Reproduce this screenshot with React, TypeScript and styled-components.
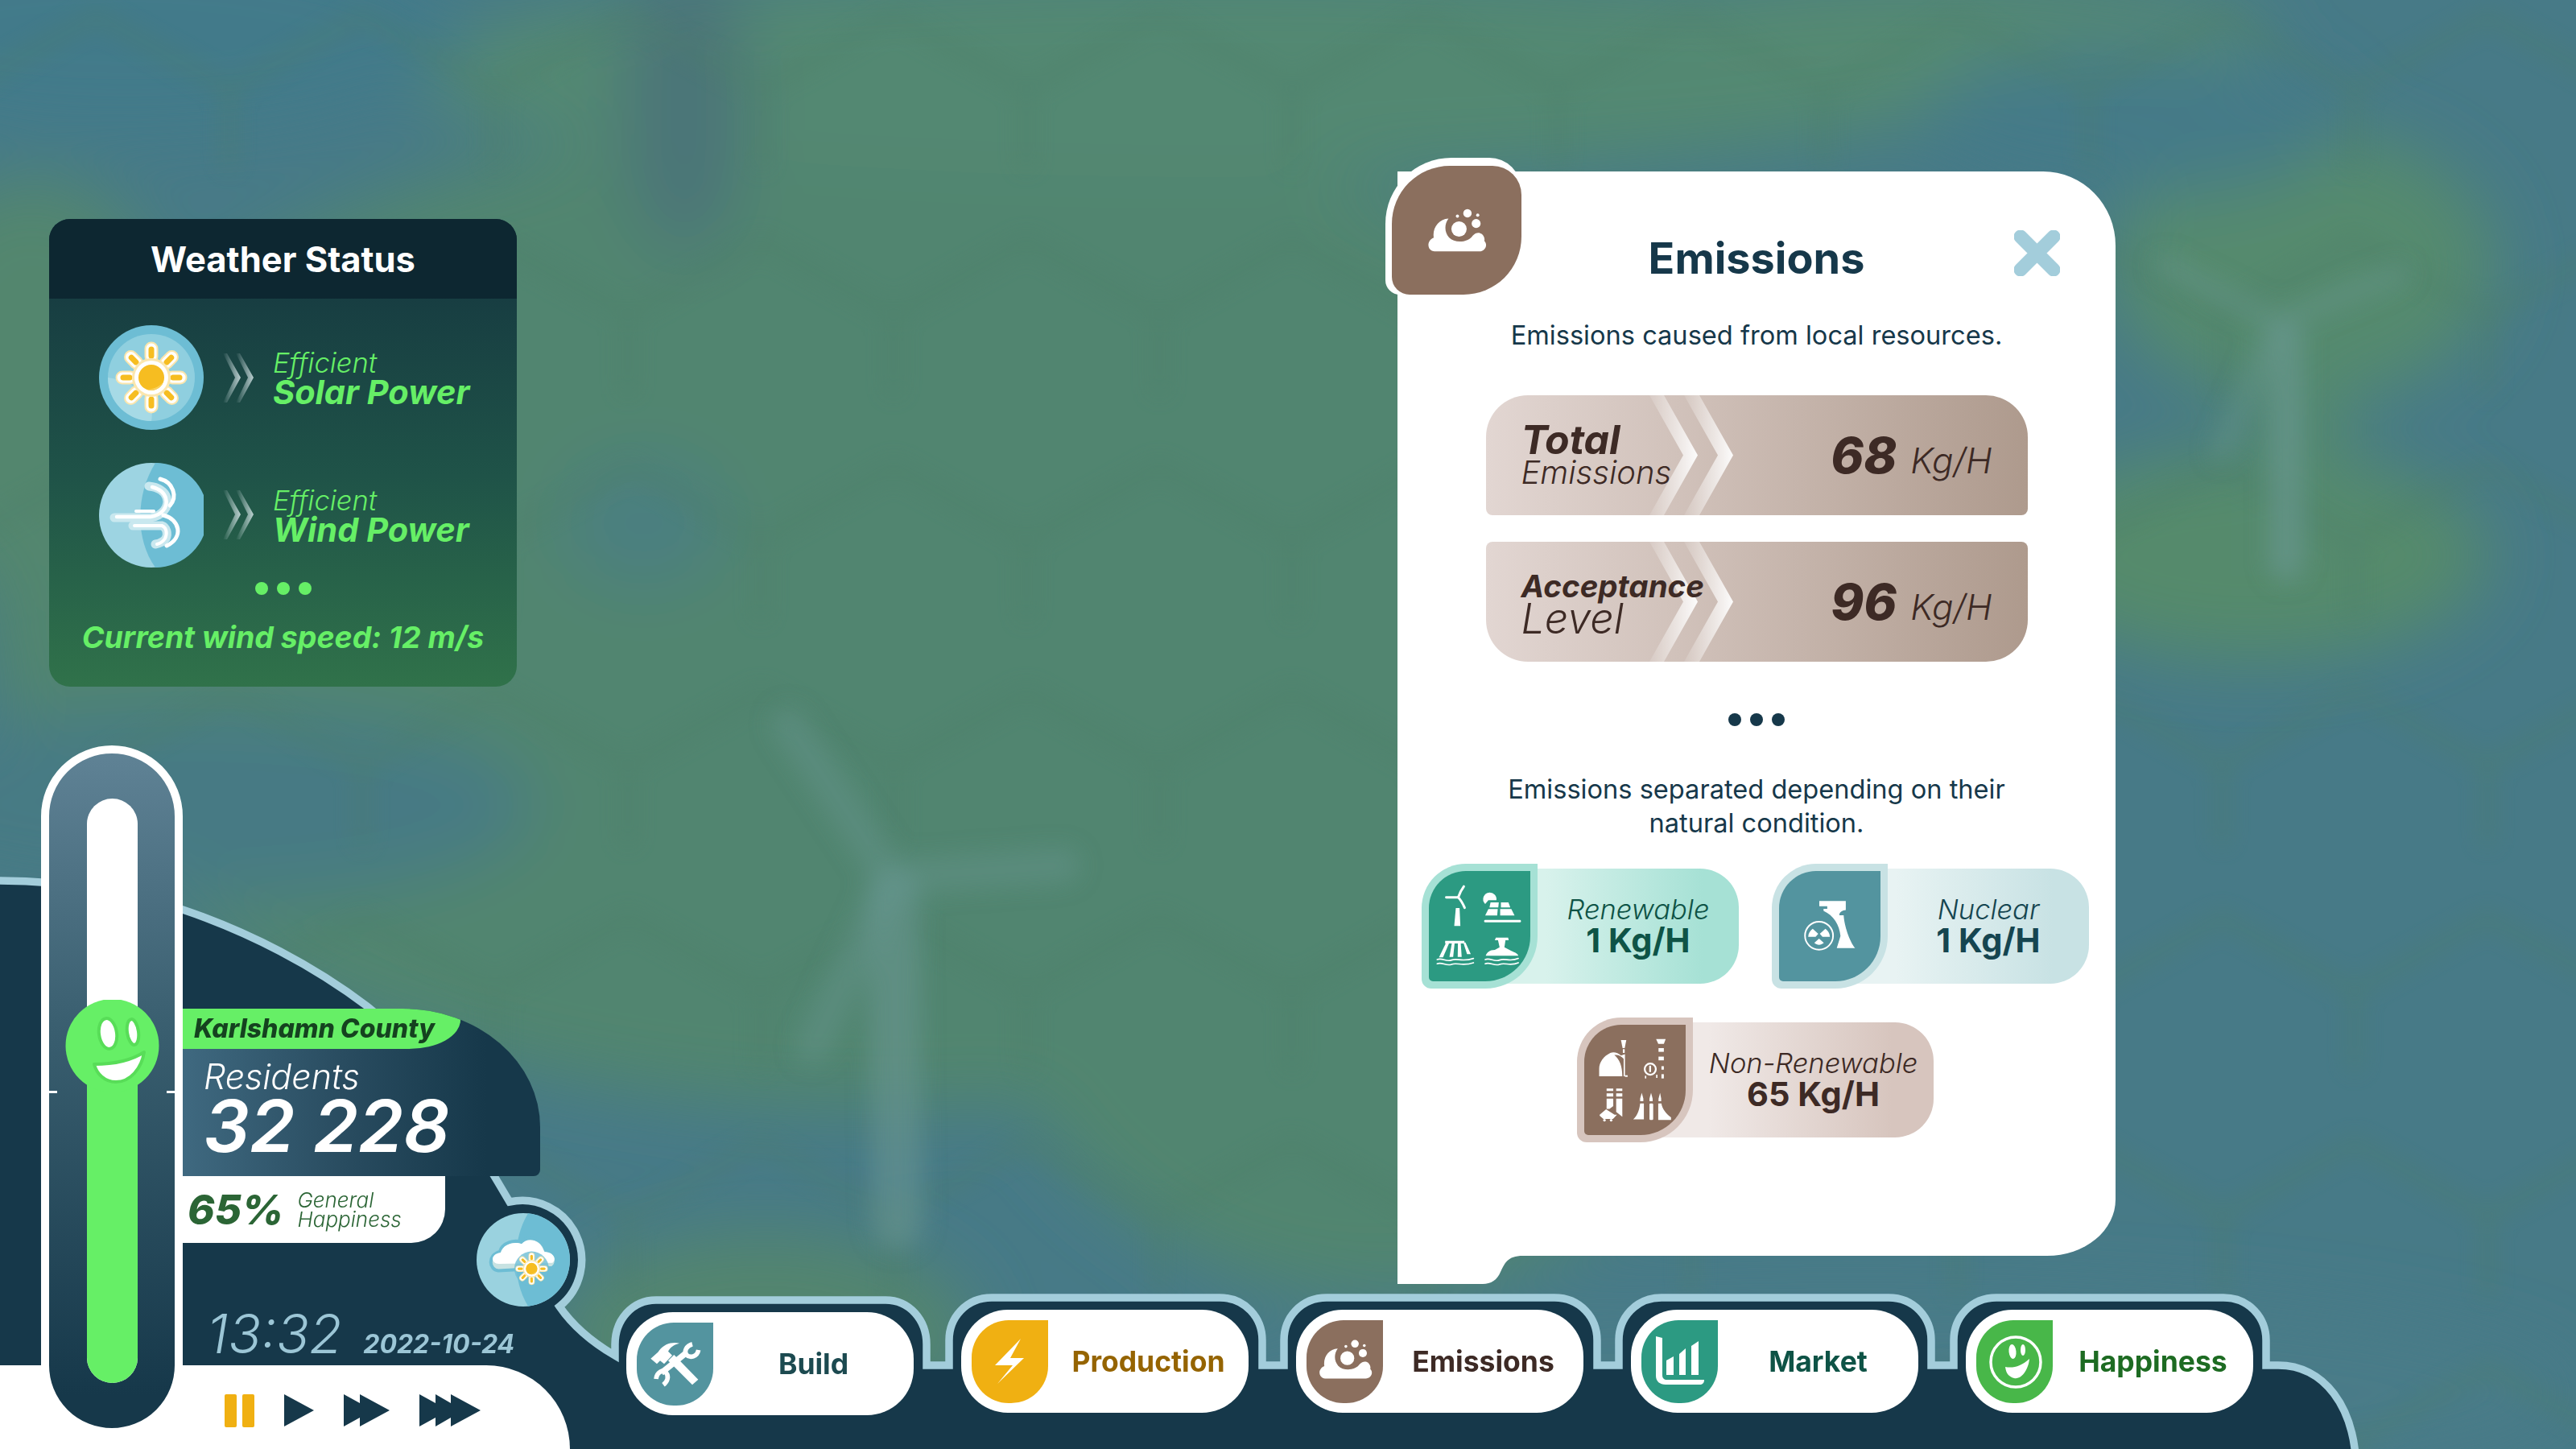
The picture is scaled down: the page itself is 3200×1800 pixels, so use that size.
import React from 'react';
import styled, { createGlobalStyle } from 'styled-components';
import { ReactNode } from 'react';

const FONT = `Inter, Lato, "Liberation Sans", sans-serif`;
const NAVY = '#16384a';
const SKY = '#a3cddb';
const LIME = '#66ef66';
const BROWN = '#8b6f5e';
const COCOA = '#3d2a25';

const GlobalStyle = createGlobalStyle`
  html, body {
    margin: 0;
    padding: 0;
    width: 3200px;
    height: 1800px;
    overflow: hidden;
    background: #477a87;
  }
  * {
    box-sizing: border-box;
  }
`;

const Stage = styled.div`
  position: relative;
  width: 3200px;
  height: 1800px;
  overflow: hidden;
  display: flex;
  align-items: flex-start;
  padding-left: 61px;
  font-family: ${FONT};
`;

const Backdrop = styled.svg`
  position: absolute;
  inset: 0;
  width: 3200px;
  height: 1800px;
`;

/* Weather panel */
const WeatherPanel = styled.section`
  position: relative;
  width: 581px;
  height: 581px;
  margin-top: 272px;
  border-radius: 26px;
  overflow: hidden;
  background: linear-gradient(180deg, #14343f 0%, #1f5348 55%, #30724a 100%);
`;

const WeatherHeader = styled.h2`
  margin: 0;
  height: 99px;
  background: #0d2731;
  color: #fff;
  font-size: 43.5px;
  font-weight: 700;
  line-height: 100px;
  text-align: center;
`;

const WeatherRows = styled.div`
  display: flex;
  flex-direction: column;
  gap: 40.5px;
  padding: 33px 0 0 62px;
`;

const WeatherRow = styled.div`
  display: flex;
  align-items: center;
  gap: 24px;
`;

const RoundIcon = styled.svg`
  width: 130px;
  height: 130px;
  flex: none;
`;

const SmallChevrons = styled.svg`
  width: 38px;
  height: 61px;
  flex: none;
`;

const WeatherText = styled.div`
  display: flex;
  flex-direction: column;
  color: ${LIME};
  font-style: italic;
  line-height: 37px;
`;

const WeatherState = styled.span`
  font-size: 34.5px;
  font-weight: 300;
`;

const WeatherName = styled.span`
  font-size: 41.5px;
  font-weight: 700;
`;

const Dots = styled.div<{ $color: string }>`
  display: flex;
  justify-content: center;
  gap: 11px;
  & > i {
    width: 16px;
    height: 16px;
    border-radius: 50%;
    background: ${(p) => p.$color};
  }
`;

const WeatherDots = styled(Dots)`
  margin-top: 18px;
`;

const WindSpeed = styled.div`
  margin-top: 33px;
  color: ${LIME};
  font-size: 37.5px;
  font-style: italic;
  font-weight: 700;
  line-height: 40px;
  text-align: center;
`;

/* Emissions panel */
const EmissionsPanel = styled.section`
  position: relative;
  z-index: 2;
  width: 892px;
  height: 1347px;
  margin: 213px 0 0 1094px;
  padding: 80px 0 0;
  background: #fff;
  border-radius: 0 90px 85px 0 / 0 92px 70px 0;
  display: flex;
  flex-direction: column;
  align-items: center;
  color: ${NAVY};

  &::after {
    content: '';
    position: absolute;
    left: 0;
    top: 100%;
    width: 160px;
    height: 35px;
    background: #fff;
    clip-path: path('M0 0H156C136 0 133 10 128 20C124 30 116 35 106 35H0Z');
  }
`;

const PanelBadge = styled.div`
  position: absolute;
  left: -15px;
  top: -17px;
  width: 169px;
  height: 170px;
  padding: 10px 0 0 8px;
  background: #fff;
  border-radius: 82px 40px 0 18px;
`;

const BadgeLeaf = styled.div`
  width: 161px;
  height: 160px;
  background: ${BROWN};
  border-radius: 72px 36px 72px 22px;
  display: flex;
  align-items: center;
  justify-content: center;
`;

const CloseButton = styled.svg`
  position: absolute;
  left: 766px;
  top: 73px;
  width: 57px;
  height: 57px;
`;

const PanelTitle = styled.h1`
  margin: 0;
  font-size: 54px;
  font-weight: 700;
  line-height: 56px;
`;

const PanelText = styled.p<{ $top: number }>`
  margin: ${(p) => p.$top}px 0 0;
  font-size: 32.6px;
  line-height: 42px;
  text-align: center;
`;

const StatBar = styled.div<{ $second?: boolean }>`
  position: relative;
  flex: none;
  width: 673px;
  height: 149px;
  margin-top: ${(p) => (p.$second ? 33 : 54)}px;
  padding: 0 44px;
  color: ${COCOA};
  display: flex;
  align-items: center;
  justify-content: space-between;
  background: linear-gradient(90deg, #e2d6d2 0%, #ccbcb4 45%, #ae9a8d 100%);
  border-radius: ${(p) => (p.$second ? '8px 8px 52px 52px' : '52px 52px 8px 8px')};
`;

const StatChevrons = styled.svg`
  position: absolute;
  left: 202px;
  top: 0;
  width: 106px;
  height: 149px;
`;

const StatLabel = styled.div`
  position: relative;
  display: flex;
  flex-direction: column;
  font-style: italic;
`;

const LabelStrong = styled.span<{ $size: number }>`
  font-size: ${(p) => p.$size}px;
  font-weight: 700;
  line-height: 42px;
`;

const LabelLight = styled.span<{ $size: number }>`
  font-size: ${(p) => p.$size}px;
  font-weight: 300;
  line-height: 40px;
`;

const StatValue = styled.div`
  position: relative;
  display: flex;
  align-items: baseline;
  gap: 17px;
  font-style: italic;
  font-size: 44px;
  font-weight: 300;
`;

const StatNumber = styled.b`
  font-size: 62px;
  font-weight: 800;
`;

const PanelDots = styled(Dots)`
  margin-top: 64px;
`;

const CardGrid = styled.div`
  align-self: flex-start;
  margin: 30px 0 0 30px;
  width: 829px;
  display: flex;
  flex-wrap: wrap;
  justify-content: center;
  gap: 36px 41px;
`;

const Card = styled.div<{ $width: number }>`
  width: ${(p) => p.$width}px;
  height: 155px;
  display: flex;
`;

const Leaf = styled.div<{ $rim: string }>`
  position: relative;
  z-index: 1;
  flex: none;
  width: 144px;
  height: 155px;
  padding: 9px;
  background: ${(p) => p.$rim};
  border-radius: 55px 0 65px 12px;
`;

const LeafFace = styled.div<{ $fill: string }>`
  width: 100%;
  height: 100%;
  background: ${(p) => p.$fill};
  border-radius: 46px 0 56px 5px;
  overflow: hidden;
  & > svg {
    display: block;
    width: 100%;
    height: 100%;
  }
`;

const CardBar = styled.div<{ $from: string; $to: string; $ink: string }>`
  flex: 1;
  margin: 6px 0 6px -50px;
  padding: 0 0 4px 50px;
  border-radius: 0 48px 48px 0;
  background: linear-gradient(90deg, ${(p) => p.$from} 20%, ${(p) => p.$to} 85%);
  color: ${(p) => p.$ink};
  display: flex;
  flex-direction: column;
  align-items: center;
  justify-content: center;
`;

const CardName = styled.span`
  font-size: 34.5px;
  font-style: italic;
  font-weight: 300;
  line-height: 38px;
`;

const CardValue = styled.b`
  font-size: 41.5px;
  font-weight: 700;
  line-height: 38px;
`;

/* Bottom dock */
const DockShape = styled.svg`
  position: absolute;
  inset: 0;
  z-index: 3;
  width: 3200px;
  height: 1800px;
  pointer-events: none;
`;

const Dock = styled.nav`
  position: absolute;
  z-index: 4;
  left: 778px;
  top: 1627px;
  display: flex;
  gap: 59px;
`;

const DockButton = styled.button<{ $ink: string; $drop?: boolean }>`
  width: 357px;
  height: 128px;
  margin-top: ${(p) => (p.$drop ? 3 : 0)}px;
  padding: 13px 0 12px 13px;
  border: 0;
  border-radius: 58px;
  background: #fff;
  color: ${(p) => p.$ink};
  font-family: ${FONT};
  font-size: 35.5px;
  font-weight: 700;
  display: flex;
`;

const DockLeaf = styled.span<{ $fill: string }>`
  flex: none;
  width: 95px;
  height: 103px;
  background: ${(p) => p.$fill};
  border-radius: 46px 0 46px 46px;
  & > svg {
    display: block;
    width: 100%;
    height: 100%;
  }
`;

const DockLabel = styled.span`
  flex: 1;
  padding-top: 28px;
  text-align: center;
  line-height: 48px;
`;

/* Left HUD */
const BottomBar = styled.div`
  position: absolute;
  z-index: 4;
  left: 0;
  bottom: 0;
  width: 708px;
  height: 104px;
  padding: 36px 0 0 279px;
  background: #fff;
  border-radius: 0 110px 0 0;
  display: flex;
  align-items: flex-start;
  gap: 37px;
`;

const PauseIcon = styled.div`
  width: 37px;
  height: 41px;
  display: flex;
  justify-content: space-between;
  & > i {
    width: 15px;
    border-radius: 2px;
    background: #f0b012;
  }
`;

const SpeedIcon = styled.svg`
  height: 40px;
  flex: none;
`;

const LeftHud = styled.div`
  position: absolute;
  z-index: 5;
  left: 51px;
  top: 926px;
  display: flex;
  align-items: flex-start;
`;

const Thermometer = styled.div`
  position: relative;
  flex: none;
  width: 176px;
  height: 858px;
  border: 10px solid #fff;
  border-radius: 88px;
  background: linear-gradient(180deg, #5f8295 0%, #3a5f70 40%, ${NAVY} 95%);
  display: flex;
  justify-content: center;
  padding-top: 56px;
`;

const Track = styled.div`
  position: relative;
  width: 63px;
  height: 726px;
  border-radius: 32px;
  background: #fff;
  display: flex;
  align-items: flex-end;
`;

const TrackFill = styled.div`
  width: 100%;
  border-radius: 0 0 32px 32px;
  background: ${LIME};
`;

const Face = styled.svg`
  position: absolute;
  left: -28px;
  top: 250px;
  width: 119px;
  height: 114px;
`;

const Tick = styled.i<{ $side: 'left' | 'right' }>`
  position: absolute;
  ${(p) => p.$side}: 0;
  top: 419px;
  width: 10px;
  height: 3px;
  background: #fff;
`;

const InfoColumn = styled.div`
  width: 444px;
  margin-top: 327px;
`;

const CountyPanel = styled.div`
  width: 444px;
  height: 208px;
  overflow: hidden;
  border-radius: 0 171px 8px 0 / 0 147px 8px 0;
  background: linear-gradient(90deg, #3f6980 0%, #294c60 45%, ${NAVY} 85%);
  color: #fff;
`;

const CountyTag = styled.div`
  width: 345px;
  height: 50px;
  padding-left: 14px;
  background: ${LIME};
  border-radius: 0 0 64px 0 / 0 0 36px 0;
  color: #15421f;
  font-size: 32px;
  font-style: italic;
  font-weight: 800;
  line-height: 50px;
  white-space: nowrap;
`;

const Residents = styled.div`
  padding: 12px 0 0 26px;
  display: flex;
  flex-direction: column;
  font-style: italic;
`;

const ResidentsLabel = styled.span`
  font-size: 43px;
  font-weight: 300;
  line-height: 44px;
`;

const ResidentsCount = styled.span`
  font-size: 90px;
  font-weight: 600;
  line-height: 80px;
`;

const HappinessStrip = styled.div`
  width: 326px;
  height: 83px;
  padding-left: 6px;
  background: #fff;
  border-radius: 0 0 42px 0;
  color: #2b6535;
  display: flex;
  align-items: center;
  gap: 17px;
  font-style: italic;
`;

const HappinessValue = styled.b`
  font-size: 51px;
  font-weight: 800;
`;

const HappinessLabel = styled.span`
  font-size: 26px;
  font-weight: 300;
  line-height: 24px;
`;

const ClockRow = styled.div`
  margin-top: 82px;
  padding-left: 30px;
  color: #9cc6d6;
  display: flex;
  align-items: baseline;
  gap: 26px;
  font-style: italic;
`;

const ClockTime = styled.span`
  font-size: 67px;
  font-weight: 300;
  line-height: 62px;
`;

const ClockDate = styled.span`
  font-size: 32px;
  font-weight: 700;
`;

const WeatherBubble = styled.svg`
  position: absolute;
  z-index: 5;
  left: 592px;
  top: 1507px;
  width: 116px;
  height: 116px;
`;

/* Drawn icons */
const SunGlyph = ({ cx, cy, s = 1 }: { cx: number; cy: number; s?: number }) => {
  const angles = [0, 45, 90, 135, 180, 225, 270, 315];
  return (
    <g transform={`translate(${cx} ${cy}) scale(${s})`}>
      {angles.map((a) => (
        <line key={`h${a}`} x1="26" x2="36" y1="0" y2="0" transform={`rotate(${a})`} stroke="#fbe6ad" strokeWidth="17" strokeLinecap="round" />
      ))}
      {angles.map((a) => (
        <line key={`w${a}`} x1="26" x2="36" y1="0" y2="0" transform={`rotate(${a})`} stroke="#fff" strokeWidth="13" strokeLinecap="round" />
      ))}
      {angles.map((a) => (
        <line key={`y${a}`} x1="27" x2="35" y1="0" y2="0" transform={`rotate(${a})`} stroke="#f6bd21" strokeWidth="7" strokeLinecap="round" />
      ))}
      <circle r="24" fill="#fbe6ad" />
      <circle r="21" fill="#fff" />
      <circle r="16" fill="#f6bd21" />
      <path d="M15 5A16 16 0 0 1-5 15C5 14 12 10 15 5Z" fill="#fad25f" />
    </g>
  );
};

const SunIcon = () => (
  <RoundIcon viewBox="0 0 130 130">
    <circle cx="65" cy="65" r="65" fill="#6dbdd4" />
    <circle cx="65" cy="65" r="54" fill="#8fcfdf" />
    <path d="M11 65A54 54 0 0 0 65 119C70 95 50 70 11 65Z" fill="#a6dae6" />
    <SunGlyph cx={65} cy={65} />
  </RoundIcon>
);

const WindIcon = () => (
  <RoundIcon viewBox="0 0 130 130">
    <circle cx="65" cy="65" r="65" fill="#9dd4e2" />
    <path d="M70 0A65 65 0 0 1 70 130C45 95 45 40 70 0Z" fill="#6dbdd4" />
    <g fill="none" stroke="#c9e8ef" strokeWidth="11" strokeLinecap="round">
      <path d="M19 68H64C78 66 88 55 84 43C82 36 74 30 62 29" />
      <path d="M42 78H78C84 80 86 88 83 94C80 98 76 100 70 101" />
    </g>
    <g fill="none" stroke="#fff" strokeLinecap="round">
      <path d="M22 67H64C78 65 86 55 83 44C81 37 74 32 66 30" strokeWidth="4.5" />
      <path d="M46 60H68" strokeWidth="4" />
      <path d="M44 78H78C84 80 85 88 82 94C80 97 76 100 72 101" strokeWidth="4" />
      <path d="M76 20C92 24 98 42 88 53" strokeWidth="5" />
      <path d="M80 65C100 70 106 92 84 103" strokeWidth="5" />
    </g>
  </RoundIcon>
);

const WeatherChevrons = ({ id }: { id: string }) => (
  <SmallChevrons viewBox="0 0 38 61">
    <defs>
      <linearGradient id={id} x1="0" x2="1" y1="0" y2="0">
        <stop offset="0" stopColor="#d7e6e8" stopOpacity="0" />
        <stop offset="1" stopColor="#d7e6e8" stopOpacity="0.85" />
      </linearGradient>
    </defs>
    <path d="M0 0L5 0L22 30L5 61L0 61L15 30Z" fill={`url(#${id})`} />
    <path d="M16 0L21 0L38 30L21 61L16 61L31 30Z" fill={`url(#${id})`} />
  </SmallChevrons>
);

const BigChevrons = ({ id }: { id: string }) => (
  <StatChevrons viewBox="0 0 106 149">
    <defs>
      <linearGradient id={id} x1="0" x2="1" y1="0" y2="0">
        <stop offset="0" stopColor="#fff" stopOpacity="0.1" />
        <stop offset="1" stopColor="#fff" stopOpacity="0.95" />
      </linearGradient>
    </defs>
    <path d="M1 0H19L61 74.5L19 149H1L43 74.5Z" fill={`url(#${id})`} />
    <path d="M44 0H63L105 74.5L63 149H44L86 74.5Z" fill={`url(#${id})`} />
  </StatChevrons>
);

const CloudSmoke = ({ size = 75 }: { size?: number }) => (
  <svg width={size} height={size * 0.72} viewBox="125 115 228 165" fill="#fff">
    <path d="M155 278C130 278 120 240 152 226C146 190 170 155 208 153C192 175 192 205 210 225C232 248 282 245 300 218C312 205 325 205 335 212C345 222 346 232 344 238C360 255 345 278 325 278Z" />
    <circle cx="248" cy="193" r="29" />
    <circle cx="280" cy="133" r="16" />
    <circle cx="313" cy="172" r="17" />
    <circle cx="242" cy="144" r="6" />
    <circle cx="319" cy="140" r="6" />
  </svg>
);

const BuildIcon = () => (
  <svg viewBox="33 38 285 309" fill="#fff">
    <path d="M85 172L108 192L120 180L135 192L165 160L150 145C158 130 172 120 192 115C165 108 135 118 118 140L112 148Z" />
    <path d="M150 180L172 158L262 250L240 270Z" />
    <g fill="none" stroke="#fff">
      <path d="M125 225L218 150" strokeWidth="22" />
      <path d="M240 118C218 124 208 145 218 158C232 172 258 165 263 140" strokeWidth="17" />
      <path d="M105 248C108 222 130 212 142 224C154 238 148 258 132 270" strokeWidth="17" />
    </g>
  </svg>
);

const BoltIcon = () => (
  <svg viewBox="0 0 95 103">
    <path d="M61 23L29 56H51L32 79L65 47H48Z" fill="#fff" />
  </svg>
);

const CloudIcon = () => (
  <svg viewBox="-14 -24 95 103">
    <svg x="0" y="0" width="68" height="49" viewBox="125 115 228 165" fill="#fff">
      <path d="M155 278C130 278 120 240 152 226C146 190 170 155 208 153C192 175 192 205 210 225C232 248 282 245 300 218C312 205 325 205 335 212C345 222 346 232 344 238C360 255 345 278 325 278Z" />
      <circle cx="248" cy="193" r="29" />
      <circle cx="280" cy="133" r="16" />
      <circle cx="313" cy="172" r="17" />
      <circle cx="242" cy="144" r="6" />
      <circle cx="319" cy="140" r="6" />
    </svg>
  </svg>
);

const MarketIcon = () => (
  <svg viewBox="0 0 95 103" fill="#fff">
    <path d="M18 20L26 22V68C26 72 28 74 32 74H78C78 78 76 80 72 80H30C23 80 18 76 18 69Z" />
    <path d="M31 50L40 45V68H31Z" />
    <path d="M47 42L55 35V68H47Z" />
    <path d="M62 32L71 26V68H62Z" />
  </svg>
);

const HappyIcon = () => (
  <svg viewBox="0 0 95 103" fill="#fff">
    <circle cx="49" cy="52" r="31" fill="none" stroke="#fff" strokeWidth="3.5" />
    <ellipse cx="45" cy="39" rx="4.5" ry="9" transform="rotate(-6 45 39)" />
    <ellipse cx="58" cy="37" rx="3" ry="7" />
    <path d="M36 58C46 60 56 57 66 48C65 60 57 74 47 72C40 70 37 66 36 58Z" />
  </svg>
);

const RenewableIcon = () => (
  <svg viewBox="75 68 380 410" fill="#fff" stroke="none">
    <path d="M176 205H190L193 272H170Z" />
    <g fill="none" stroke="#fff" strokeWidth="9" strokeLinecap="round">
      <path d="M140 165H185" />
      <path d="M185 165C190 150 198 135 206 124" />
      <path d="M185 165C195 175 203 190 209 204" />
    </g>
    <path d="M302 147A25 25 0 0 0 286 190L298 176H328A25 25 0 0 0 302 147Z" />
    <path d="M306 184H337L335 203H302Z" />
    <path d="M345 184H373L380 203H345Z" />
    <path d="M298 209H333L331 233H286Z" />
    <path d="M342 209H384L396 233H342Z" />
    <rect x="282" y="250" width="138" height="9" rx="4" />
    <path d="M140 334H152L128 390H113Z" />
    <path d="M162 332H172L166 388H152Z" />
    <path d="M184 332H194L198 388H183Z" />
    <path d="M204 334H212L232 378H218Z" />
    <path d="M136 328H208V338H136Z" />
    <path d="M326 316H372L374 326H362L358 352L384 366C398 372 408 376 410 384H288C292 372 302 362 322 362L340 352L334 326H322Z" />
    <g fill="none" stroke="#fff" strokeWidth="5" strokeLinecap="round">
      <path d="M106 398C124 390 140 408 160 400C180 392 200 408 242 394" />
      <path d="M106 414C124 406 140 424 160 416C180 408 200 424 242 410" />
      <path d="M286 398C304 390 320 408 340 400C360 392 380 408 410 394" />
      <path d="M286 414C304 406 320 424 340 416C360 408 380 424 410 410" />
    </g>
  </svg>
);

const NuclearIcon = () => (
  <svg viewBox="30 67 383 412" fill="#fff">
    <path d="M182 178H282V212C270 212 255 222 258 232H274C276 270 296 330 317 356H248L262 310C258 268 236 232 198 215V208H212V198H182Z" />
    <circle cx="181" cy="309" r="53" fill="none" stroke="#fff" strokeWidth="6" />
    <path d="M157 283L178 302L168 313H140C141 300 147 290 157 283Z" />
    <path d="M205 283L184 302L194 313H222C221 300 215 290 205 283Z" />
    <path d="M181 320L163 336C174 346 188 346 199 336Z" />
  </svg>
);

const NonRenewableIcon = () => (
  <svg viewBox="52 38 381 407" fill="#fff">
    <path d="M190 92H210L204 122H196Z" />
    <rect x="197" y="126" width="7" height="14" />
    <path d="M108 228V200C108 175 125 152 150 140C162 136 178 138 190 150L205 145V228H200V162C190 150 178 146 165 148C185 165 195 190 195 228Z" />
    <path d="M146 158L146 222H122V200C122 182 132 168 146 158Z" />
    <path d="M152 158V222H178V200C178 182 168 168 152 158Z" />
    <rect x="205" y="224" width="10" height="6" />
    <path d="M322 88H358L351 106H330Z" />
    <rect x="331" y="122" width="20" height="14" />
    <rect x="331" y="154" width="20" height="14" />
    <circle cx="300" cy="201" r="21" fill="none" stroke="#fff" strokeWidth="7" />
    <rect x="296" y="188" width="7" height="24" />
    <rect x="342" y="190" width="9" height="13" />
    <rect x="342" y="220" width="9" height="16" />
    <rect x="322" y="222" width="5" height="12" />
    <rect x="280" y="226" width="5" height="10" />
    <rect x="136" y="274" width="25" height="9" />
    <rect x="172" y="274" width="23" height="9" />
    <rect x="136" y="292" width="25" height="12" />
    <rect x="172" y="292" width="23" height="12" />
    <path d="M136 312H161V340L147 350H136Z" />
    <path d="M172 312H195V380L172 362Z" />
    <path d="M110 372L134 352L166 372L175 372L160 388H124L110 376Z" />
    <circle cx="128" cy="393" r="5" />
    <circle cx="153" cy="393" r="5" />
    <path d="M268 290L274 312V322H262V312Z" />
    <path d="M303 290L309 312V322H297V312Z" />
    <path d="M337 290L341 312V322H331V312Z" />
    <path d="M262 330H276V390H236C246 380 258 365 262 330Z" />
    <rect x="297" y="330" width="14" height="62" rx="4" />
    <path d="M330 330H342C344 350 362 372 378 382V392H330Z" />
  </svg>
);

const Legend = ({ width, rim, fill, from, to, ink, name, value, icon }: {
  width: number; rim: string; fill: string; from: string; to: string; ink: string; name: string; value: string; icon: ReactNode;
}) => (
  <Card $width={width}>
    <Leaf $rim={rim}>
      <LeafFace $fill={fill}>{icon}</LeafFace>
    </Leaf>
    <CardBar $from={from} $to={to} $ink={ink}>
      <CardName>{name}</CardName>
      <CardValue>{value}</CardValue>
    </CardBar>
  </Card>
);

const hexCells: [number, number][] = [];
for (let r = 0; r < 7; r++) {
  for (let c = 0; c < 10; c++) {
    hexCells.push([120 + c * 330 + (r % 2) * 165, 160 + r * 280]);
  }
}

const MapBackground = () => (
  <Backdrop viewBox="0 0 3200 1800" preserveAspectRatio="none">
    <defs>
      <filter id="mapBlur" x="-10%" y="-10%" width="120%" height="120%">
        <feGaussianBlur stdDeviation="42" />
      </filter>
      <filter id="lineBlur" x="-10%" y="-10%" width="120%" height="120%">
        <feGaussianBlur stdDeviation="14" />
      </filter>
    </defs>
    <rect width="3200" height="1800" fill="#477a87" />
    <g filter="url(#mapBlur)">
      <ellipse cx="1100" cy="760" rx="1120" ry="620" fill="#518570" />
      <ellipse cx="1700" cy="1050" rx="520" ry="560" fill="#518570" />
      <ellipse cx="1500" cy="90" rx="1000" ry="130" fill="#538872" />
      <ellipse cx="2400" cy="40" rx="420" ry="70" fill="#548972" />
      <ellipse cx="2860" cy="330" rx="240" ry="170" fill="#548a6e" />
      <ellipse cx="2800" cy="690" rx="290" ry="130" fill="#558a6c" />
      <rect x="2800" y="300" width="110" height="420" fill="#548a6e" />
      <ellipse cx="40" cy="480" rx="190" ry="260" fill="#52866e" />
      <ellipse cx="850" cy="130" rx="75" ry="190" fill="#4b7578" />
      <ellipse cx="160" cy="40" rx="420" ry="130" fill="#437a8a" />
      <ellipse cx="800" cy="650" rx="100" ry="80" fill="#4c7f80" />
      <ellipse cx="240" cy="1000" rx="420" ry="120" fill="#477a84" />
      <ellipse cx="2650" cy="150" rx="260" ry="90" fill="#447a88" />
      <ellipse cx="2300" cy="1730" rx="900" ry="130" fill="#4a7c88" />
      <ellipse cx="950" cy="1660" rx="260" ry="130" fill="#52856e" />
    </g>
    <g filter="url(#lineBlur)" fill="none" stroke="#4d7e69" strokeWidth="14" opacity="0.45">
      {hexCells.map(([x, y]) => (
        <path key={`${x}-${y}`} d={`M${x - 165} ${y - 50}L${x} ${y - 140}L${x + 165} ${y - 50}V${y + 50}`} />
      ))}
    </g>
    <g filter="url(#lineBlur)" fill="none" stroke="#6a9792" strokeLinecap="round">
      <path d="M1110 1110L1115 1520" strokeWidth="64" opacity="0.55" />
      <path d="M1100 1080L980 900M1110 1090L1320 1075M1110 1090L1010 1300" strokeWidth="44" opacity="0.35" />
      <path d="M2840 420V700" strokeWidth="44" opacity="0.6" />
      <path d="M2830 400L2690 330M2830 400L2980 340M2830 400L2760 560" strokeWidth="28" opacity="0.35" />
    </g>
  </Backdrop>
);

const App = () => (
  <>
    <GlobalStyle />
    <Stage>
      <MapBackground />

      <WeatherPanel>
        <WeatherHeader>Weather Status</WeatherHeader>
        <WeatherRows>
          <WeatherRow>
            <SunIcon />
            <WeatherChevrons id="chevA" />
            <WeatherText>
              <WeatherState>Efficient</WeatherState>
              <WeatherName>Solar Power</WeatherName>
            </WeatherText>
          </WeatherRow>
          <WeatherRow>
            <WindIcon />
            <WeatherChevrons id="chevB" />
            <WeatherText>
              <WeatherState>Efficient</WeatherState>
              <WeatherName>Wind Power</WeatherName>
            </WeatherText>
          </WeatherRow>
        </WeatherRows>
        <WeatherDots $color={LIME}><i /><i /><i /></WeatherDots>
        <WindSpeed>Current wind speed: 12 m/s</WindSpeed>
      </WeatherPanel>

      <EmissionsPanel>
        <PanelBadge>
          <BadgeLeaf><CloudSmoke /></BadgeLeaf>
        </PanelBadge>
        <CloseButton viewBox="0 0 57 57">
          <path d="M8 8L49 49M49 8L8 49" stroke={SKY} strokeWidth="17" strokeLinecap="round" />
        </CloseButton>
        <PanelTitle>Emissions</PanelTitle>
        <PanelText $top={46}>Emissions caused from local resources.</PanelText>

        <StatBar>
          <BigChevrons id="statA" />
          <StatLabel>
            <LabelStrong $size={50}>Total</LabelStrong>
            <LabelLight $size={40}>Emissions</LabelLight>
          </StatLabel>
          <StatValue><StatNumber>68</StatNumber> Kg/H</StatValue>
        </StatBar>
        <StatBar $second>
          <BigChevrons id="statB" />
          <StatLabel>
            <LabelStrong $size={38.5}>Acceptance</LabelStrong>
            <LabelLight $size={52}>Level</LabelLight>
          </StatLabel>
          <StatValue><StatNumber>96</StatNumber> Kg/H</StatValue>
        </StatBar>

        <PanelDots $color={NAVY}><i /><i /><i /></PanelDots>
        <PanelText $top={57}>
          Emissions separated depending on their
          <br />
          natural condition.
        </PanelText>

        <CardGrid>
          <Legend width={394} rim="#a6e1d5" fill="#2c9a82" from="#d8f2ec" to="#a6e1d5" ink="#0e5346" name="Renewable" value="1 Kg/H" icon={<RenewableIcon />} />
          <Legend width={394} rim="#c8e2e4" fill="#53949f" from="#e8f3f3" to="#c8e2e4" ink="#154550" name="Nuclear" value="1 Kg/H" icon={<NuclearIcon />} />
          <Legend width={443} rim="#d7c5be" fill={BROWN} from="#f0e9e7" to="#d7c5be" ink={COCOA} name="Non-Renewable" value="65 Kg/H" icon={<NonRenewableIcon />} />
        </CardGrid>
      </EmissionsPanel>

      <DockShape viewBox="0 0 3200 1800">
        <path
          fill={NAVY}
          stroke={SKY}
          strokeWidth="9.5"
          d="M-10 1094C90 1094 160 1108 227 1130C310 1158 390 1200 456 1250C520 1300 590 1420 633 1493A74 74 0 0 1 695 1623C715 1652 740 1670 764 1684V1670C764 1640 785 1615 815 1615H1100C1130 1615 1151 1640 1151 1670V1696H1179V1665C1179 1637 1200 1612 1232 1612H1515C1547 1612 1568 1637 1568 1665V1696H1595V1665C1595 1637 1616 1612 1648 1612H1931C1963 1612 1984 1637 1984 1665V1696H2011V1665C2011 1637 2032 1612 2064 1612H2346C2378 1612 2399 1637 2399 1665V1696H2427V1665C2427 1637 2448 1612 2480 1612H2762C2794 1612 2815 1637 2815 1665V1696H2830C2885 1696 2927 1745 2927 1830H-10Z"
        />
      </DockShape>

      <Dock>
        <DockButton $ink="#1c4a50" $drop>
          <DockLeaf $fill="#53949f"><BuildIcon /></DockLeaf>
          <DockLabel>Build</DockLabel>
        </DockButton>
        <DockButton $ink="#956400">
          <DockLeaf $fill="#f0b012"><BoltIcon /></DockLeaf>
          <DockLabel>Production</DockLabel>
        </DockButton>
        <DockButton $ink={COCOA}>
          <DockLeaf $fill={BROWN}><CloudIcon /></DockLeaf>
          <DockLabel>Emissions</DockLabel>
        </DockButton>
        <DockButton $ink="#0e5346">
          <DockLeaf $fill="#2c9a82"><MarketIcon /></DockLeaf>
          <DockLabel>Market</DockLabel>
        </DockButton>
        <DockButton $ink="#1d6b22">
          <DockLeaf $fill="#48b749"><HappyIcon /></DockLeaf>
          <DockLabel>Happiness</DockLabel>
        </DockButton>
      </Dock>

      <BottomBar>
        <PauseIcon><i /><i /></PauseIcon>
        <SpeedIcon viewBox="0 0 37 40" width="37"><path d="M0 0L37 20L0 40Z" fill={NAVY} /></SpeedIcon>
        <SpeedIcon viewBox="0 0 57 40" width="57"><path d="M0 0L20 11V0L57 20L20 40V29L0 40Z" fill={NAVY} /></SpeedIcon>
        <SpeedIcon viewBox="0 0 76 40" width="76"><path d="M0 0L20 11V0L39 11V0L76 20L39 40V29L20 40V29L0 40Z" fill={NAVY} /></SpeedIcon>
      </BottomBar>

      <LeftHud>
        <Thermometer>
          <Tick $side="left" />
          <Tick $side="right" />
          <Track>
            <TrackFill style={{ height: 419 }} />
            <Face viewBox="0 0 119 114">
              <circle cx="59.5" cy="57" r="58" fill={LIME} />
              <ellipse cx="54" cy="42" rx="11" ry="19" transform="rotate(-8 54 42)" fill="#fff" stroke="#58dd58" strokeWidth="4" />
              <ellipse cx="85" cy="40" rx="7" ry="16" transform="rotate(-8 85 40)" fill="#fff" stroke="#58dd58" strokeWidth="4" />
              <path d="M37 80C60 80 82 76 99 65C96 85 82 102 64 102C50 102 40 92 37 80Z" fill="#fff" stroke="#58dd58" strokeWidth="4" strokeLinejoin="round" />
            </Face>
          </Track>
        </Thermometer>
        <InfoColumn>
          <CountyPanel>
            <CountyTag>Karlshamn County</CountyTag>
            <Residents>
              <ResidentsLabel>Residents</ResidentsLabel>
              <ResidentsCount>32 228</ResidentsCount>
            </Residents>
          </CountyPanel>
          <HappinessStrip>
            <HappinessValue>65%</HappinessValue>
            <HappinessLabel>General<br />Happiness</HappinessLabel>
          </HappinessStrip>
          <ClockRow>
            <ClockTime>13:32</ClockTime>
            <ClockDate>2022-10-24</ClockDate>
          </ClockRow>
        </InfoColumn>
      </LeftHud>

      <WeatherBubble viewBox="39 52 346 346">
        <circle cx="212" cy="225" r="173" fill="#9ad2df" />
        <path d="M230 53A173 173 0 0 1 230 397C170 300 170 150 230 53Z" fill="#6dbdd4" />
        <path d="M120 265C85 262 78 208 125 195C135 160 180 150 205 160C225 135 280 140 295 190C335 190 345 240 320 254Z" fill="#c7e2e2" stroke="#6dbdd4" strokeWidth="12" strokeLinejoin="round" />
        <path d="M122 240C92 238 88 205 128 198C138 165 180 156 206 166C226 142 276 146 290 196C325 196 338 225 320 236Z" fill="#fff" />
        <circle cx="243" cy="258" r="64" fill="#6dbdd4" opacity="0.8" />
        <SunGlyph cx={243} cy={258} s={1.35} />
      </WeatherBubble>
    </Stage>
  </>
);

export default App;
